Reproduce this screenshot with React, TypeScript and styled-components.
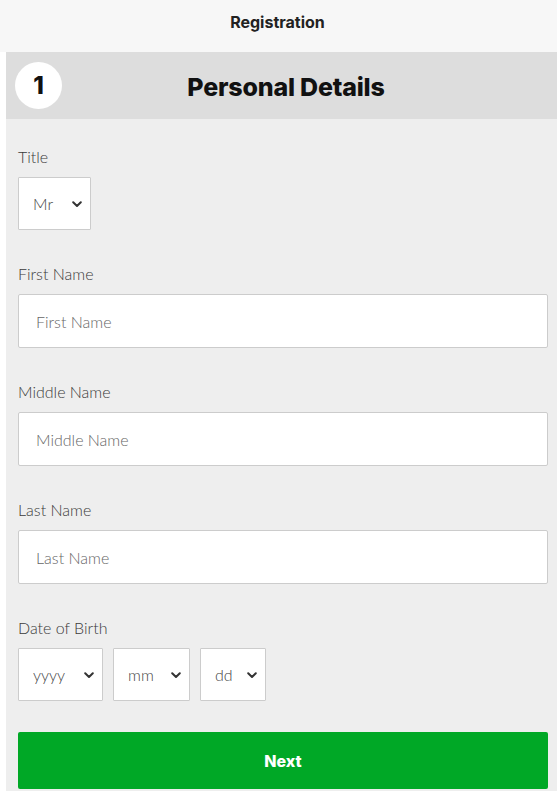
import React from 'react';
import styled, { createGlobalStyle } from 'styled-components';

const GlobalStyle = createGlobalStyle`
    html, body {
        margin: 0;
        padding: 0;
        background: #ffffff;
        font-family: Lato, "Open Sans", Arial, sans-serif;
    }
    * {
        box-sizing: border-box;
    }
`;

const TopBar = styled.header`
    height: 52px;
    background: #f7f7f7;
    display: flex;
    align-items: center;
    justify-content: center;
    font-family: Inter, "Liberation Sans", sans-serif;
    font-size: 16px;
    font-weight: 700;
    color: #222222;
    padding: 0 2px 8px 0;
`;

const Panel = styled.section`
    margin-left: 6px;
    background: #eeeeee;
    padding-bottom: 2px;
`;

const PanelHeader = styled.div`
    height: 67px;
    background: #dddddd;
    display: flex;
    align-items: center;
    padding-left: 9px;
`;

const StepBadge = styled.div`
    width: 47px;
    height: 47px;
    border-radius: 50%;
    background: #ffffff;
    display: flex;
    align-items: center;
    justify-content: center;
    font-family: Inter, "Liberation Sans", sans-serif;
    font-size: 24px;
    font-weight: 800;
    color: #111111;
`;

const PanelTitle = styled.h2`
    flex: 1;
    margin: 0;
    text-align: center;
    font-family: Inter, "Liberation Sans", sans-serif;
    font-size: 25px;
    font-weight: 800;
    letter-spacing: -0.2px;
    color: #111111;
    padding: 2px 47px 0 0;
`;

const Form = styled.form`
    padding: 28px 9px 0 12px;
    display: flex;
    flex-direction: column;
`;

const Field = styled.div`
    display: flex;
    flex-direction: column;
    margin-bottom: 34px;
`;

const Label = styled.label`
    font-size: 16px;
    font-weight: 300;
    line-height: 20px;
    color: #3a3a3a;
    margin-bottom: 10px;
`;

const TextInput = styled.input`
    height: 54px;
    width: 100%;
    border: 1px solid #cccccc;
    border-radius: 2px;
    background: #ffffff;
    padding: 0 17px;
    font-family: inherit;
    font-size: 16px;
    font-weight: 300;
    color: #333333;
    outline: none;

    &::placeholder {
        color: #666666;
    }
`;

const SelectRow = styled.div`
    display: flex;
    gap: 10px;
`;

const SelectWrap = styled.div<{ $width: number }>`
    position: relative;
    width: ${({ $width }) => $width}px;
    height: 53px;
`;

const Select = styled.select`
    appearance: none;
    width: 100%;
    height: 100%;
    border: 1px solid #cccccc;
    border-radius: 1px;
    background: #ffffff;
    padding: 0 0 0 14px;
    font-family: inherit;
    font-size: 16px;
    font-weight: 300;
    color: #444444;
    outline: none;
`;

const Chevron = styled.svg`
    position: absolute;
    right: 9px;
    top: 50%;
    width: 10px;
    height: 7px;
    margin-top: -3px;
    pointer-events: none;
`;

const NextButton = styled.button`
    margin-top: -3px;
    height: 57px;
    width: 100%;
    border: none;
    border-radius: 2px;
    background: #00a826;
    color: #ffffff;
    font-family: Inter, "Liberation Sans", sans-serif;
    font-size: 16px;
    font-weight: 800;
    cursor: pointer;
`;

const ChevronIcon = () => (
    <Chevron viewBox="0 0 10 7">
        <path d="M1.2 1.2 L5 5 L8.8 1.2" fill="none" stroke="#333" strokeWidth="2" strokeLinecap="round" strokeLinejoin="round" />
    </Chevron>
);

const Dropdown: React.FC<{ width: number; options: string[] }> = ({ width, options }) => (
    <SelectWrap $width={width}>
        <Select defaultValue={options[0]}>
            {options.map((o) => (
                <option key={o}>{o}</option>
            ))}
        </Select>
        <ChevronIcon />
    </SelectWrap>
);

export default function App() {
    return (
        <>
            <GlobalStyle />
            <TopBar>Registration</TopBar>
            <Panel>
                <PanelHeader>
                    <StepBadge>1</StepBadge>
                    <PanelTitle>Personal Details</PanelTitle>
                </PanelHeader>
                <Form onSubmit={(e) => e.preventDefault()}>
                    <Field>
                        <Label>Title</Label>
                        <Dropdown width={73} options={['Mr', 'Mrs', 'Ms', 'Miss', 'Dr']} />
                    </Field>
                    <Field>
                        <Label>First Name</Label>
                        <TextInput placeholder="First Name" />
                    </Field>
                    <Field>
                        <Label>Middle Name</Label>
                        <TextInput placeholder="Middle Name" />
                    </Field>
                    <Field>
                        <Label>Last Name</Label>
                        <TextInput placeholder="Last Name" />
                    </Field>
                    <Field>
                        <Label>Date of Birth</Label>
                        <SelectRow>
                            <Dropdown width={85} options={['yyyy']} />
                            <Dropdown width={77} options={['mm']} />
                            <Dropdown width={66} options={['dd']} />
                        </SelectRow>
                    </Field>
                    <NextButton type="submit">Next</NextButton>
                </Form>
            </Panel>
        </>
    );
}
